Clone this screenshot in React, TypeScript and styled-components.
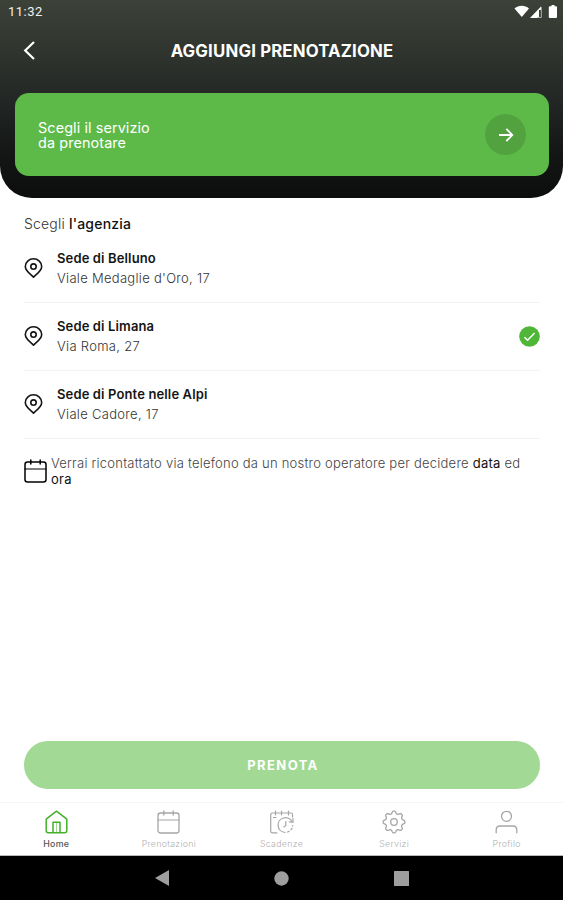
import React from "react";
import styled, { createGlobalStyle } from "styled-components";

const GlobalStyle = createGlobalStyle`
  * { box-sizing: border-box; }
  body { margin: 0; background: #fff; font-family: Inter, "Liberation Sans", sans-serif; }
`;

const Screen = styled.div`
  width: 563px;
  height: 900px;
  display: flex;
  flex-direction: column;
  background: #fff;
  overflow: hidden;
`;

const Header = styled.header`
  height: 198px;
  flex: none;
  padding: 0 14px 0 15px;
  border-radius: 0 0 32px 32px;
  background: linear-gradient(#3c4238 0%, #30352f 25%, #232725 50%, #131615 78%, #0c0e0d 100%);
  color: #fff;
`;

const StatusBar = styled.div`
  height: 24px;
  margin: 0 -9px 0 -7px;
  display: flex;
  align-items: flex-start;
  justify-content: space-between;
`;

const Clock = styled.span`
  font: 400 13px/24px Roboto, sans-serif;
  letter-spacing: 0.5px;
  color: #f0f1ef;
`;

const TitleBar = styled.div`
  height: 53px;
  margin-bottom: 16px;
  display: grid;
  grid-template-columns: 30px 1fr 30px;
  align-items: center;
`;

const Title = styled.h1`
  margin: 0;
  font-size: 16.8px;
  font-weight: 700;
  letter-spacing: 0.16px;
  text-align: center;
  white-space: nowrap;
`;

const ServiceCard = styled.div`
  height: 83px;
  padding: 0 23px;
  border-radius: 14px;
  background: #5dba48;
  display: flex;
  align-items: center;
  justify-content: space-between;
`;

const ServiceText = styled.div`
  font-size: 14.4px;
  line-height: 15px;
  letter-spacing: 0.1px;
`;

const ArrowCircle = styled.div`
  width: 41px;
  height: 41px;
  border-radius: 50%;
  background: #52a340;
  display: flex;
  align-items: center;
  justify-content: center;
`;

const Content = styled.main`
  flex: 1;
  padding: 16px 23px 0 24px;
  display: flex;
  flex-direction: column;
`;

const SectionTitle = styled.h2`
  margin: 0;
  height: 20.6px;
  font-size: 14px;
  font-weight: 300;
  line-height: 20px;
  color: #333;
  letter-spacing: 0.18px;
  b { font-weight: 500; color: #111; }
`;

const AgencyRow = styled.div`
  height: 68px;
  flex: none;
  display: flex;
  align-items: center;
  border-bottom: 1px solid #f3f3f3;
`;

const AgencyText = styled.div`
  flex: 1;
  margin-left: 14px;
`;

const AgencyName = styled.div`
  font-size: 13px;
  line-height: 20px;
  font-weight: 600;
  letter-spacing: 0.13px;
  color: #151515;
`;

const AgencyAddress = styled.div`
  font-size: 13px;
  line-height: 20px;
  font-weight: 300;
  letter-spacing: 0.3px;
  color: #333;
`;

const Notice = styled.div`
  margin-top: 16px;
  display: flex;
  align-items: center;
  gap: 4px;
`;

const NoticeText = styled.p`
  margin: 0;
  font-size: 13px;
  font-weight: 300;
  line-height: 16px;
  letter-spacing: 0.23px;
  color: #444;
  white-space: nowrap;
  b { font-weight: 400; color: #111; }
`;

const BookButton = styled.button`
  height: 48px;
  margin: auto 0 13px;
  padding: 0 0 0 2px;
  border: 0;
  border-radius: 24px;
  background: #a1d995;
  color: #fff;
  font: 700 13px Inter, sans-serif;
  letter-spacing: 1.4px;
`;

const TabBar = styled.nav`
  height: 54px;
  flex: none;
  display: grid;
  grid-template-columns: repeat(5, 1fr);
  border-top: 1px solid #f5f5f5;
  border-bottom: 1px solid #b9b9b9;
`;

const Tab = styled.div<{ $active?: boolean }>`
  display: flex;
  flex-direction: column;
  align-items: center;
  padding-top: 7px;
  color: ${(p) => (p.$active ? "#43b02a" : "#a6a6a6")};
`;

const TabLabel = styled.span<{ $active?: boolean }>`
  margin-top: 3.5px;
  font-size: 8.8px;
  line-height: 12px;
  font-weight: ${(p) => (p.$active ? 500 : 300)};
  letter-spacing: 0.3px;
  color: ${(p) => (p.$active ? "#555" : "#b0b0b0")};
`;

const SystemBar = styled.div`
  height: 44px;
  flex: none;
  background: #000;
  display: grid;
  grid-template-columns: repeat(3, 120px);
  justify-content: center;
  align-items: center;
  justify-items: center;
`;

const StatusIcons = () => (
  <svg width="44" height="20" viewBox="0 -3 44 20" fill="#fff">
    <path d="M.5 5.400C4.500 1.800 11.100 1.800 15 5.400L7.800 14z" />
    <path d="M16 15 27 3.500V7H25V15z" />
    <path d="M27.300 4v10.500h-4" fill="none" stroke="#aeb1ad" strokeWidth="1" />
    <path d="M35.800 3.200h1.700V2h3v1.200H42q1 0 1 1V14q0 1-1 1h-6.200q-1 0-1-1V4.200q0-1 1-1z" />
  </svg>
);

const PinIcon = () => (
  <svg width="19" height="20" viewBox="0 0 19 20" fill="none" stroke="#161616" strokeWidth="1.6">
    <path d="M9.500 19.200C7.600 17 1.300 13.300 1.300 8.500a8.200 7.700 0 0 1 16.400 0C17.700 13.300 11.400 17 9.500 19.200z" />
    <circle cx="9.500" cy="8.600" r="2.700" />
  </svg>
);

const CalendarIcon = ({ weight = 1.3 }: { weight?: number }) => (
  <svg width="23" height="24" viewBox="0 0 23 24" fill="none" stroke="currentColor" strokeWidth={weight} strokeLinecap="round">
    <rect x="1" y="3" width="21" height="20" rx="2.500" />
    <path d="M6.800 1v4M16.200 1v4" />
    <path d="M1 10h21" strokeWidth="1.100" />
  </svg>
);

const CheckIcon = () => (
  <svg width="21" height="21" viewBox="0 0 21 21" fill="none">
    <circle cx="10.500" cy="10.500" r="10.300" fill="#50b637" />
    <path d="m5.400 11.200 3.200 3.100 7-7.300" stroke="#fff" strokeWidth="1.500" />
  </svg>
);

const HomeIcon = () => (
  <svg width="23" height="24" viewBox="0 0 23 24" fill="none" stroke="currentColor" strokeWidth="1.500" strokeLinejoin="round">
    <path d="M1.200 9.200 11.500 1.200l10.300 8V20.500q0 2.300-2.300 2.300h-16q-2.300 0-2.300-2.300z" />
    <path d="M8 22.500V12.300h7v10.200" />
    <path d="M11.500 12.300v10.200" strokeWidth=".5" />
  </svg>
);

const DeadlineIcon = () => (
  <svg width="25" height="24" viewBox="0 0 25 24" fill="none" stroke="currentColor" strokeWidth="1.200" strokeLinecap="round">
    <path d="M8 22.800H3.500Q1.700 22.800 1.700 21V4.700Q1.700 3 3.500 3H22q1.500 0 1.500 1.700V7M6.500 1v4M12.500 1v4M19.500 1v4" />
    <path d="M4.500 7.500h2.500" />
    <path d="M23.200 12A7.400 7.400 0 1 0 16 22.500" />
    <path d="M18.500 22A7.400 7.400 0 0 0 23.800 15.500" strokeDasharray="1.800 2.200" />
    <path d="M24 8.500v3.700l-3.700-.3M16.800 11.500v4l-2 1.500" />
  </svg>
);

// Eight rounded teeth around the hub.
const gearOutline =
  Array.from({ length: 96 }, (_, i) => {
    const angle = (i / 96) * Math.PI * 2;
    const radius = 9.7 + 1.25 * Math.tanh(1.8 * Math.cos(angle * 8));
    return `${i ? "L" : "M"}${(12 + radius * Math.sin(angle)).toFixed(2)} ${(12 - radius * Math.cos(angle)).toFixed(2)}`;
  }).join("") + "z";

const GearIcon = () => (
  <svg width="24" height="24" viewBox="0 0 24 24" fill="none" stroke="currentColor" strokeWidth="1.300" strokeLinejoin="round">
    <path d={gearOutline} />
    <circle cx="12" cy="12" r="3.300" />
  </svg>
);

const ProfileIcon = () => (
  <svg width="23" height="24" viewBox="0 0 23 24" fill="none" stroke="currentColor" strokeWidth="1.300" strokeLinecap="round">
    <circle cx="11.500" cy="6.300" r="5" />
    <path d="M1.200 22.800V20q0-4 4-4h12.600q4 0 4 4v2.800" />
  </svg>
);

const agencies = [
  { name: "Sede di Belluno", address: "Viale Medaglie d'Oro, 17" },
  { name: "Sede di Limana", address: "Via Roma, 27", selected: true },
  { name: "Sede di Ponte nelle Alpi", address: "Viale Cadore, 17" },
];

const tabs = [
  { label: "Home", icon: <HomeIcon />, active: true },
  { label: "Prenotazioni", icon: <CalendarIcon /> },
  { label: "Scadenze", icon: <DeadlineIcon /> },
  { label: "Servizi", icon: <GearIcon /> },
  { label: "Profilo", icon: <ProfileIcon /> },
];

export default function App() {
  return (
    <>
      <GlobalStyle />
      <Screen>
        <Header>
          <StatusBar>
            <Clock>11:32</Clock>
            <StatusIcons />
          </StatusBar>
          <TitleBar>
            <svg width="28" height="22" viewBox="0 0 28 22" fill="none" stroke="#fff" strokeWidth="2.200">
              <path d="M19 2 10.200 10.500l8.800 8.500" />
            </svg>
            <Title>AGGIUNGI PRENOTAZIONE</Title>
          </TitleBar>
          <ServiceCard>
            <ServiceText>
              Scegli il servizio
              <br />
              da prenotare
            </ServiceText>
            <ArrowCircle>
              <svg width="16" height="16" viewBox="0 0 16 16" fill="none" stroke="#fff" strokeWidth="1.800">
                <path d="M1 8h13M8.300 1.800 14.300 8l-6 6.200" />
              </svg>
            </ArrowCircle>
          </ServiceCard>
        </Header>
        <Content>
          <SectionTitle>
            Scegli <b>l'agenzia</b>
          </SectionTitle>
          {agencies.map((agency) => (
            <AgencyRow key={agency.name}>
              <PinIcon />
              <AgencyText>
                <AgencyName>{agency.name}</AgencyName>
                <AgencyAddress>{agency.address}</AgencyAddress>
              </AgencyText>
              {agency.selected && <CheckIcon />}
            </AgencyRow>
          ))}
          <Notice>
            <CalendarIcon weight={1.5} />
            <NoticeText>
              Verrai ricontattato via telefono da un nostro operatore per decidere <b>data</b> ed
              <br />
              <b>ora</b>
            </NoticeText>
          </Notice>
          <BookButton>PRENOTA</BookButton>
        </Content>
        <TabBar>
          {tabs.map((tab) => (
            <Tab key={tab.label} $active={tab.active}>
              {tab.icon}
              <TabLabel $active={tab.active}>{tab.label}</TabLabel>
            </Tab>
          ))}
        </TabBar>
        <SystemBar>
          <svg width="16" height="16" viewBox="0 0 16 16" fill="#9e9e9e"><path d="M15 0v16L1 8z" /></svg>
          <svg width="15" height="15" viewBox="0 0 15 15" fill="#9e9e9e"><circle cx="7.500" cy="7.500" r="7.200" /></svg>
          <svg width="15" height="15" viewBox="0 0 15 15" fill="#9e9e9e"><rect width="15" height="15" rx=".5" /></svg>
        </SystemBar>
      </Screen>
    </>
  );
}
